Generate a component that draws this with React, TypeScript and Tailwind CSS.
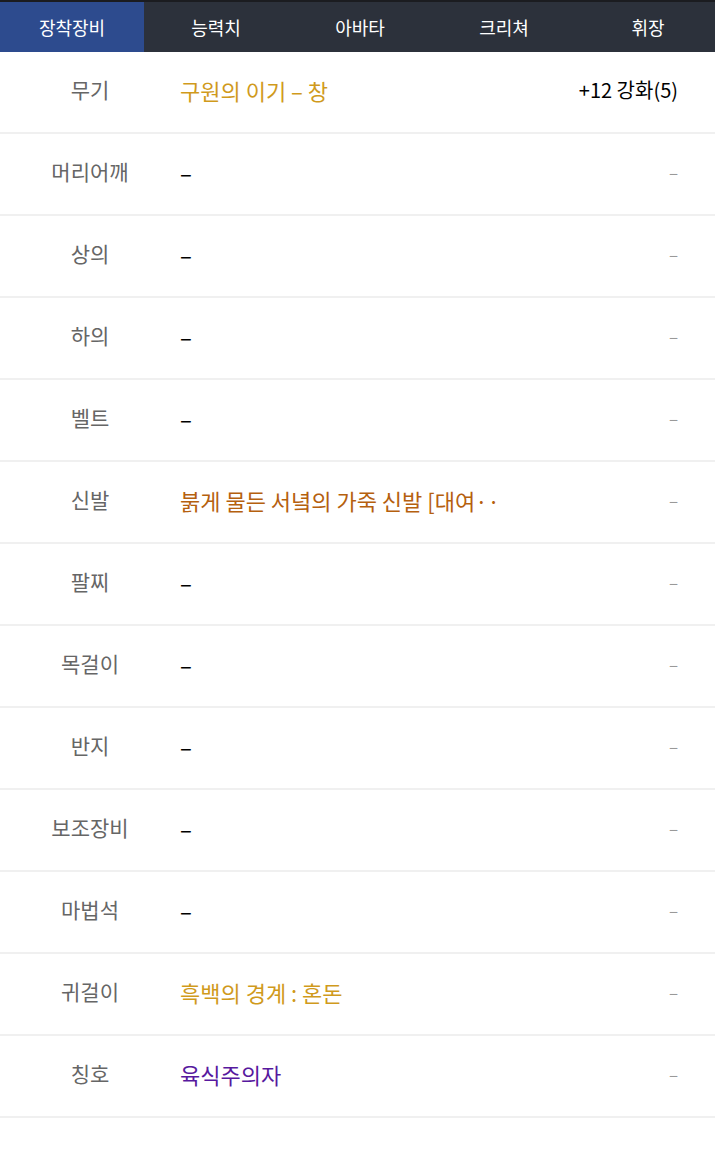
import React from 'react';

const tabs = ['장착장비', '능력치', '아바타', '크리쳐', '휘장'];

type Row = { label: string; value: string; color?: string; extra?: string };

const rows: Row[] = [
  { label: '무기', value: '구원의 이기 – 창', color: 'text-[#d09a1c]', extra: '+12 강화(5)' },
  { label: '머리어깨', value: '–' },
  { label: '상의', value: '–' },
  { label: '하의', value: '–' },
  { label: '벨트', value: '–' },
  { label: '신발', value: '붉게 물든 서녘의 가죽 신발 [대여··', color: 'text-[#b5600e]' },
  { label: '팔찌', value: '–' },
  { label: '목걸이', value: '–' },
  { label: '반지', value: '–' },
  { label: '보조장비', value: '–' },
  { label: '마법석', value: '–' },
  { label: '귀걸이', value: '흑백의 경계 : 혼돈', color: 'text-[#d09a1c]' },
  { label: '칭호', value: '육식주의자', color: 'text-[#57199e]' },
];

const App: React.FC = () => {
  return (
    <div className="min-h-screen overflow-hidden bg-white font-['Noto_Sans_CJK_KR','Noto_Sans',sans-serif]">
      <div className="h-[2px] bg-[#1b1c20]" />
      <nav className="flex h-[50px] overflow-hidden bg-[#2c313b]">
        {tabs.map((t, i) => (
          <div
            key={t}
            className={`flex w-[144px] shrink-0 items-center justify-center text-[18px] text-white ${
              i === 0 ? 'bg-[#2d4b8e]' : ''
            }`}
          >
            {t}
          </div>
        ))}
      </nav>

      <div>
        {rows.map((r) => (
          <div key={r.label} className="flex h-[82px] items-center border-b-2 border-[#f0f0f0] pb-[4px]">
            <div className="w-[180px] text-center text-[21px] text-[#666666]">{r.label}</div>
            <div className={`flex-1 text-[22px] ${r.color ?? 'text-black'}`}>{r.value}</div>
            <div className="pr-[37px] text-right">
              {r.extra ? (
                <span className="text-[20px] text-black">{r.extra}</span>
              ) : (
                <span className="text-[17px] text-[#999999]">–</span>
              )}
            </div>
          </div>
        ))}
      </div>
    </div>
  );
};

export default App;
